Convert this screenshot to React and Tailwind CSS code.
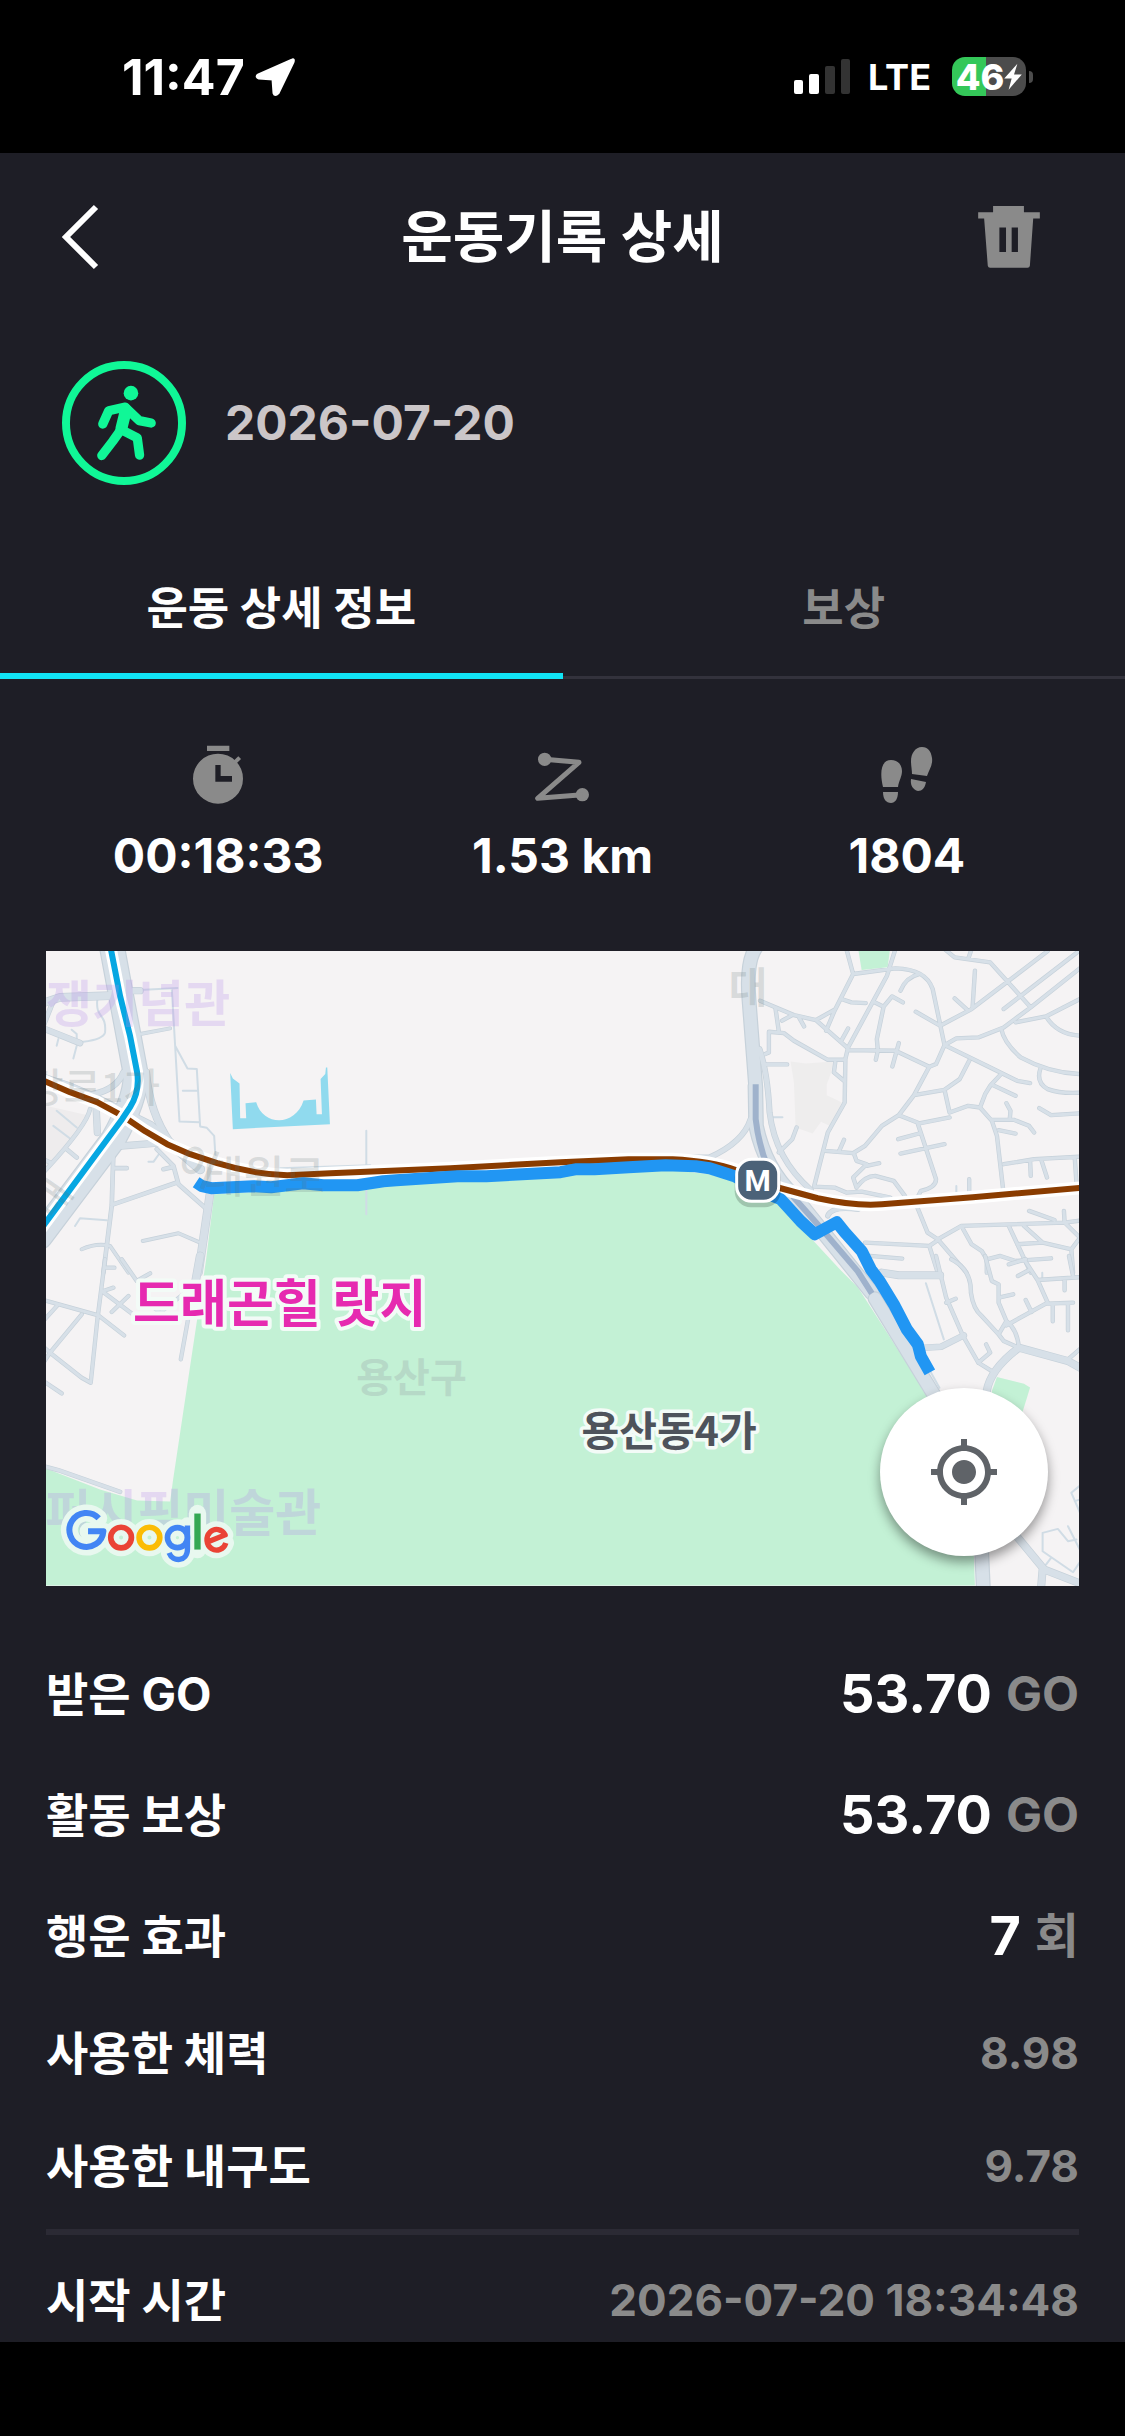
import React from "react";
import { MdMyLocation } from "react-icons/md";

const KR = "font-['Inter','Noto_Sans_CJK_KR',sans-serif]";

/* Street geometry, one sheet per map tile: [stroke width, path]. */
const TILES = [
  {
    transform: "translate(-6 -12) scale(.33333)",
    roads: [
      [78, "M215 20L286 400Q292 470 220 600L0 892"],
      [30, "M0 415L90 445L170 480L330 560L480 690"],
      [24, "M318 400Q328 520 390 610"],
      [26, "M0 195L60 175L210 170"],
      [20, "M0 264L120 312"],
      [16, "M40 185L10 260"],
      [22, "M280 155H300"],
      [12, "M300 285L390 268"],
      [20, "M160 465Q230 450 250 400"],
      [22, "M168 500L172 580"],
      [14, "M150 510Q140 560 10 700M80 630L110 655M0 655L30 670"],
      [22, "M225 622L350 612"],
      [14, "M220 640L215 800L200 920L190 1000M225 687H260M370 690L400 683M215 797L410 730M350 630L400 680L415 735L500 810"],
      [12, "M308 905L415 882L480 910M125 930Q170 910 210 920L265 1000"],
      [26, "M510 760L475 1000"],
    ],
    lanes:
      "M172 180C165 240 200 220 195 280Q190 300 130 308M110 320L100 358M95 272L110 285V310M50 320L55 300M300 153L412 147M395 150L405 320L442 388L470 390L480 562L500 566L522 590L526 655M405 320L418 547L478 549M428 455H470M978 575V680M720 687L990 678M978 750V825M50 515L110 565M40 560L90 598M325 668H340L360 640M105 860L120 837L200 843",
  },
  {
    transform: "translate(514 -12) scale(.338 .33333)",
    roads: [
      [18, "M562 540Q540 610 440 655H380M588 330Q612 400 618 520Q635 660 740 752"],
      [44, "M582 20Q548 60 557 180L576 430"],
      [46, "M576 440L578 560Q605 690 690 770L920 1060"],
      [16, "M790 830Q800 800 880 810"],
      [
        13,
        "M845 30L865 105L810 215L785 275M865 105L990 88Q1080 90 1100 150L1135 318L1110 375L1090 383L990 335L850 333M990 30L965 110L850 325L842 360L840 490L790 580L750 740M830 180L860 190L902 192M590 185L690 228L755 243L850 328M755 243L810 212M635 205L645 275M655 245L685 228M705 235L720 262M605 345L616 340V278L660 282L690 305L790 362H842M605 376H670M850 268L830 305M812 370L808 400L838 425M925 188L955 203L935 300L938 335L932 362M955 203L980 172L1012 190M1000 312L981 382M1005 155Q1020 115 1060 105M1050 218L1122 260L1215 210L1440 36M1225 95L1218 205M1165 178L1200 210M1135 30L1165 55L1270 70L1390 205M1205 60L1215 30M1540 30L1310 210M1545 80L1390 205L1310 265L1235 295L1170 298L1135 318M1545 175L1435 232L1345 250M1435 232Q1470 290 1545 290M1303 270Q1310 310 1360 355Q1450 405 1545 405M1418 390Q1405 430 1440 450Q1480 465 1545 460M1415 507L1450 528L1545 522M1135 318L1270 385L1350 425L1388 432M1208 365L1180 420L1135 452L1045 468M1135 452L1150 520L1205 500L1240 505L1275 545L1290 590L1308 748M1150 535L1060 553M1302 405L1270 440L1255 465L1242 500M1278 438L1345 470M1318 492L1330 515L1328 540M1275 542H1340L1385 560L1400 580M1295 573L1345 583M1090 383L1045 468L1000 528L950 560L900 620L865 642L782 635M1000 528L1055 550L1110 720Q1110 745 1065 755L1050 785M998 600L1060 583M1005 643L1135 615M838 602L825 632M868 645L875 665L905 675L865 715L875 745M905 680L942 672M875 745Q900 710 930 710L985 725L1018 770M750 742L810 745L845 760L890 757L975 775M645 640L685 600L698 565M1310 675L1400 660L1545 652M1388 665L1390 710M1422 665L1438 715M1520 655L1525 730M1208 720V755M1055 805L1085 880L1115 900L1170 965L1200 1000M1115 900L1185 860L1490 850L1545 843M900 910L1090 920L1115 903M1090 920L1115 1000M915 950L1010 958M1385 815L1460 842M1488 815L1490 850L1540 900M1185 860L1215 915L1245 935L1260 960L1300 950L1345 965L1450 957M1260 960V1000M1325 860L1390 1000M1370 860L1425 910L1350 915M1425 910L1510 930L1532 900M1510 930L1515 1000",
      ],
    ],
    lanes: "M628 534H656M1170 740V760",
  },
  {
    transform: "translate(-6 308) scale(.33333)",
    roads: [
      [
        13,
        "M195 0L172 180L152 370L125 355L30 280L125 165M245 0L290 65L330 42M10 122L175 168L252 228M185 95L285 170M265 110L215 158M190 95L220 85M195 25H223M10 185L55 135M10 310L30 280L10 262M10 365L65 402M435 100L360 160L335 140M460 90L422 300",
      ],
      [26, "M480 -10L462 90"],
      [14, "M10 620L55 632L240 697"],
    ],
    lanes: "",
  },
  {
    transform: "translate(514 308) scale(.338 .33333)",
    roads: [
      [44, "M930 118L1100 400L1200 560L1245 880L1250 990"],
      [24, "M950 40L1000 48L1122 48"],
      [20, "M1075 265L1125 262L1192 228"],
      [
        13,
        "M1110 -10L1140 115L1190 230L1235 310L1275 335M1140 130L1168 118M1235 310L1270 280L1258 255M1155 0Q1215 30 1213 100Q1220 150 1245 170L1295 225L1310 245L1355 265M1255 -10L1275 65L1295 75V130L1318 185L1295 225M1295 115L1338 105M1370 0L1410 62L1440 130L1318 198M1318 185Q1350 210 1355 265M1410 62L1545 53M1352 50L1385 32M1375 122L1392 158M1440 133L1515 130M1455 135V186M1500 135V213M1490 60V93M1503 -10L1515 50M1325 15L1375 0M1500 300L1540 265",
      ],
      [24, "M1260 395Q1270 330 1355 265L1500 305L1545 330M1340 820L1430 930L1545 975M1420 990L1425 930"],
    ],
    lanes:
      "M1080 72L1133 240M1090 330L1120 385M1424 40V60M1545 670L1510 700L1540 770M1520 725L1535 720M1425 820L1470 808L1500 845L1525 840M1500 800L1540 880M1425 820V875L1515 938L1540 900M1435 915L1450 895",
  },
];

const TRANSIT_BROWN =
  "M-6 128L24 141L51 151L77 165L99 180L121 193L144 203L171 212Q207 223 241 224L284 222L404 217L514 211L582 208L626 208Q665 210 690 219L734 237L771 247Q808 255 835 253L926 246L1040 236";
const TRANSIT_CYAN = "M64 -6L74 45L84 85L91 121Q94 140 84 156L76 168L-6 279";
const ROUTE =
  "M150 231L156 235L165 237L207 235L225 236L257 232L277 234L311 234L337 230L350 229L411 225L440 225L514 221L530 218L548 218L582 216L619 214L649 215L663 217L688 225L717 241L734 248L754 270L768 283L790 271L798 281L815 300L824 318L833 330L847 353L860 378L871 393L874 405L883 421";

function GoogleShapes({ halo }) {
  const w = halo ? 34 : 1;
  const c = (color) => (halo ? "#e8f8ef" : color);
  return (
    <g fill="none" strokeLinejoin="round" strokeLinecap={halo ? "round" : "butt"}>
      <path d="M176 776A51 51 0 1 0 190 815H144" stroke={c("#4285f4")} strokeWidth={17 + w} />
      <circle cx="243" cy="834" r="31" stroke={c("#ea4335")} strokeWidth={16 + w} />
      <circle cx="328" cy="834" r="31" stroke={c("#fbbc05")} strokeWidth={16 + w} />
      <circle cx="412" cy="834" r="30" stroke={c("#4285f4")} strokeWidth={16 + w} />
      <path d="M442 798V868C442 908 397 908 387 880" stroke={c("#4285f4")} strokeWidth={15 + w} />
      <path d="M472 762V870" stroke={c("#34a853")} strokeWidth={18 + w} />
      <path d="M502 847L555 826A29 31 0 1 0 557 850" stroke={c("#ea4335")} strokeWidth={15 + w} />
    </g>
  );
}

function RouteMap() {
  return (
    <svg
      viewBox="0 0 1032 634"
      className="block w-full bg-[#f5f3f4] font-['Noto_Sans_CJK_KR',sans-serif] font-medium"
      role="img"
      aria-label="운동 경로 지도"
    >
      <path d="M168 243L160 308L127 528L124 550L91 549L54 538L0 517V634H928L927 605L881 445L840 381L811 336L793 318L730 250L688 230L663 223L619 218Z" fill="#c3f1d5" />
      <g transform={TILES[0].transform}>
        <path d="M18 500L150 530L18 690Z" fill="#eeeced" />
        <path d="M570 402L578 418L598 433L600 537H618L616 492L648 489C670 562 765 562 790 484L827 481L829 525H845L841 420L855 405L857 385H861L869 555L578 570Z" fill="#90daee" />
      </g>
      <g transform={TILES[1].transform}>
        <path d="M680 367L725 373L805 367L800 400L787 435V468L832 490L795 560L770 548L745 583L695 565L690 430Z" fill="#eeeded" />
        <path d="M880 30H974L967 85L890 93Z" fill="#c3f1d5" />
      </g>
      <path transform={TILES[3].transform} d="M1290 353L1370 373L1388 384L1365 460L1275 440V395Z" fill="#c3f1d5" />

      {TILES.map((tile, i) => (
        <g key={i} transform={tile.transform} fill="none" strokeLinecap="round" strokeLinejoin="round">
          <path d={tile.lanes} stroke="#d0dce5" strokeWidth="6" />
          {tile.roads.map(([w, d], j) => (
            <path key={j} d={d} stroke="#c6d1da" strokeWidth={w} />
          ))}
          {tile.roads.map(([w, d], j) => (
            <path key={j} d={d} stroke="#d7e0e8" strokeWidth={w > 40 ? w - 7 : w - 4} />
          ))}
        </g>
      ))}

      <g fill="none" stroke="#9fb2cc" strokeWidth="6">
        <path d="M709 133V168Q712 195 722 218" />
        <path d="M746 245L770 272L811 320L825 342" />
      </g>

      <g fill="none" strokeLinejoin="round">
        <path d={TRANSIT_BROWN} stroke="#fff" strokeWidth="13" />
        <path d={TRANSIT_BROWN} stroke="#8a3c00" strokeWidth="6" />
        <path d={TRANSIT_CYAN} stroke="#fff" strokeWidth="12" />
        <path d={TRANSIT_CYAN} stroke="#06a7e2" strokeWidth="6" />
      </g>
      <path d={ROUTE} fill="none" stroke="#2196f3" strokeWidth="12" strokeLinejoin="round" />

      <g>
        <text x="184" y="71" fontSize="50" textAnchor="end" fill="#b48ce6" fillOpacity=".26" className="font-bold">쟁기념관</text>
        <g fill="#5f7070" fillOpacity=".2">
          <text x="114" y="151" fontSize="40" textAnchor="end">강로1가</text>
          <text x="127" y="222" fontSize="44" transform="rotate(22 127 222)">이</text>
          <text x="157" y="242" fontSize="44">태원로</text>
          <text x="682" y="52" fontSize="42" className="font-bold">대</text>
          <text x="8" y="270" fontSize="38" transform="rotate(-55 8 270)">대</text>
        </g>
        <text x="275" y="579" fontSize="50" textAnchor="end" fill="#b48ce6" fillOpacity=".26" className="font-bold">퍼시픽미술관</text>
        <text x="310" y="441" fontSize="40" fill="#b6d9c7" className="font-bold">용산구</text>
        <g strokeLinejoin="round" style={{ paintOrder: "stroke" }} className="font-bold">
          <text x="87" y="371" fontSize="51" fill="#e62ab0" stroke="#f3fbf7" strokeWidth="8">드래곤힐 랏지</text>
          <text x="535" y="495" fontSize="41" fill="#4e535b" stroke="#f3fbf7" strokeWidth="7">용산동4가</text>
        </g>
      </g>

      <rect x="688" y="210" width="46" height="46" rx="16" fill="#000" fillOpacity=".18" />
      <rect x="690" y="208" width="42" height="42" rx="15" fill="#4b6278" stroke="#fff" strokeWidth="3" />
      <text x="711" y="240" fontSize="30" textAnchor="middle" fill="#fff" className="font-['Roboto',sans-serif] font-bold">M</text>

      <g transform={TILES[2].transform}>
        <GoogleShapes halo />
        <GoogleShapes />
      </g>
    </svg>
  );
}

function StatusBar() {
  return (
    <div className="flex h-[153px] items-center justify-between bg-black pr-[92px] pl-[122px] font-['Inter',sans-serif] text-white">
      <div className="flex items-center gap-[10px]">
        <span className="text-[50px] leading-none font-bold">11:47</span>
        <svg viewBox="0 0 40 40" className="size-10" fill="currentColor" stroke="currentColor" strokeWidth="3" strokeLinejoin="round" aria-hidden="true">
          <path d="M37 3L3 18Q1 20 4 21L18 22L19 36Q20 39 23 36L38 5Q39 2 37 3Z" />
        </svg>
      </div>
      <div className="flex items-center">
        <svg viewBox="0 0 56 35" className="h-[35px] w-14" aria-hidden="true">
          <rect x="0" y="21" width="9" height="14" rx="2" fill="#fff" />
          <rect x="15" y="15" width="10" height="20" rx="2" fill="#fff" />
          <rect x="31" y="7" width="10" height="28" rx="2" fill="#333" />
          <rect x="47" y="0" width="9" height="35" rx="2" fill="#333" />
        </svg>
        <span className="ml-[18px] text-[36px] leading-none font-bold">LTE</span>
        <div className="ml-[21px] flex h-[39px] w-[74px] items-center justify-center rounded-[13px] bg-[linear-gradient(90deg,#34c759_46%,#4c4c4c_46%)]">
          <span className="text-[36px] leading-none font-extrabold">46</span>
          <svg viewBox="675 66 52 80" className="h-[27px] w-[18px]" fill="currentColor" aria-hidden="true">
            <path d="M714 68L675 112H697L688 145L727 100H704Z" />
          </svg>
        </div>
        <span className="ml-[3px] h-3 w-1 rounded-r-full bg-[#4c4c4c]" />
      </div>
    </div>
  );
}

function Stat({ icon, value }) {
  return (
    <div className="flex flex-col items-center">
      <dt className="text-[#8a8a8a]">{icon}</dt>
      <dd className="mt-[22px] text-[48px] leading-[60px] font-bold">{value}</dd>
    </div>
  );
}

function Row({ label, children, className }) {
  return (
    <div className={"flex items-center justify-between " + className}>
      <dt>{label}</dt>
      <dd className="flex items-center gap-[14px] text-[44px] leading-[60px] font-bold text-[#8a8a8a]">
        {children}
      </dd>
    </div>
  );
}

function Amount({ value, unit }) {
  return (
    <>
      <span className="text-[54px] text-white">{value}</span>
      <span className="text-[48px]">{unit}</span>
    </>
  );
}

export default function App() {
  return (
    <div className={"flex min-h-screen flex-col bg-black text-white " + KR}>
      <StatusBar />
      <main className="bg-[#1e1e26]">
        <header className="grid grid-cols-[1fr_auto_1fr] items-center px-[61px] pt-[50px]">
          <button type="button" aria-label="뒤로" className="justify-self-start">
            <svg viewBox="0 0 38 68" className="h-[68px] w-[38px]" fill="none" stroke="currentColor" strokeWidth="6" aria-hidden="true">
              <path d="M35 4L5 34L35 64" />
            </svg>
          </button>
          <h1 className="text-[56px] leading-[68px] font-bold">운동기록 상세</h1>
          <button type="button" aria-label="삭제" className="mr-6 justify-self-end text-[#8a8a8a]">
            <svg viewBox="597 498 186 187" className="size-[62px]" fill="currentColor" fillRule="evenodd" aria-hidden="true">
              <path d="M642 498H735V517H783V536H763L753 678Q752 684 746 684H633Q627 684 626 678L615 536H597V517H642ZM661 563V637H681V563ZM698 563V637H717V563Z" />
            </svg>
          </button>
        </header>

        <section className="mt-[90px] flex items-center gap-[39px] px-[62px]">
          <svg viewBox="35 58 374 374" className="size-[124px] text-[#10f797]" fill="none" stroke="currentColor" strokeWidth="28" strokeLinecap="round" strokeLinejoin="round" aria-label="걷기" role="img">
            <circle cx="222" cy="245" r="175" strokeWidth="24" />
            <circle cx="243" cy="155" r="22" fill="currentColor" stroke="none" />
            <path d="M158 248L176 208L226 197" />
            <path d="M230 202L268 238L304 245" />
            <path d="M218 258L188 300L155 343" />
            <path d="M215 266L262 290L269 342" />
            <path d="M228 206L214 262" strokeWidth="36" />
          </svg>
          <time className="text-[48px] leading-[60px] font-bold text-[#cbc6c8]">2026-07-20</time>
        </section>

        <div role="tablist" className="mt-[60px] flex h-[134px] text-[45px] font-bold">
          <button type="button" role="tab" aria-selected="true" className="flex-1 border-b-6 border-[#11e4f5]">
            운동 상세 정보
          </button>
          <button type="button" role="tab" aria-selected="false" className="flex-1 border-b-3 border-[#33323c] pb-[3px] text-[#8a8a8a]">
            보상
          </button>
        </div>

        <div className="px-[46px]">
          <dl className="grid grid-cols-3 pt-[66px] pb-[65px]">
            <Stat
              value="00:18:33"
              icon={
                <svg viewBox="68 45 150 177" className="h-[59px] w-[50px]" fill="currentColor" role="img" aria-label="시간">
                  <path fillRule="evenodd" d="M110 47H177V63H110ZM143 71A75 75 0 1 0 143 221A75 75 0 1 0 143 71ZM135 105H151V138H185V155H135Z" />
                  <path d="M190 100L208 83" stroke="currentColor" strokeWidth="12" />
                </svg>
              }
            />
            <Stat
              value="1.53 km"
              icon={
                <svg viewBox="1095 45 162 177" className="h-[59px] w-[54px]" fill="currentColor" role="img" aria-label="거리">
                  <circle cx="1124" cy="88" r="20" />
                  <circle cx="1237" cy="194" r="20" />
                  <path d="M1124 88L1227 97L1103 205L1237 194" fill="none" stroke="currentColor" strokeWidth="15" strokeLinejoin="round" />
                </svg>
              }
            />
            <Stat
              value="1804"
              icon={
                <svg viewBox="0 -2 52 59" className="h-[59px] w-[52px]" fill="currentColor" role="img" aria-label="걸음 수">
                  <path d="M10 13C-1 13-1 28 2 40H17C18 33 21 30 21 24C21 17 16 13 10 13Z" />
                  <path d="M2 45H17C17 52 14 56 10 56C5 56 2 52 2 45Z" />
                  <path d="M41 0C34 0 30 7 30 14C30 19 31 23 31 27L46 29C48 23 52 18 51 11C50 4 47 0 41 0Z" />
                  <path d="M30 32L45 35C44 41 41 44 37 44C32 43 29 38 30 32Z" />
                </svg>
              }
            />
          </dl>

          <section className="relative">
            <RouteMap />
            <button
              type="button"
              aria-label="현재 위치"
              className="absolute right-[31px] bottom-[30px] flex size-[168px] items-center justify-center rounded-full bg-white text-[#5f6368] shadow-[0_6px_12px_rgba(0,0,0,0.4)]"
            >
              <MdMyLocation className="size-[72px]" aria-hidden="true" />
            </button>
          </section>

          <dl className="pt-12 text-[46px] leading-[60px] font-bold">
            <Row label="받은 GO" className="h-[121px]">
              <Amount value="53.70" unit="GO" />
            </Row>
            <Row label="활동 보상" className="h-[121px]">
              <Amount value="53.70" unit="GO" />
            </Row>
            <Row label="행운 효과" className="h-[121px]">
              <Amount value="7" unit="회" />
            </Row>
            <Row label="사용한 체력" className="h-[113px]">8.98</Row>
            <Row label="사용한 내구도" className="h-[113px]">9.78</Row>
            <Row label="시작 시간" className="mt-[6px] h-[113px] border-t-6 border-[#2b2a34] pt-6">
              2026-07-20 18:34:48
            </Row>
          </dl>
        </div>
      </main>
      <div className="min-h-[93px] flex-1 bg-black" />
    </div>
  );
}
